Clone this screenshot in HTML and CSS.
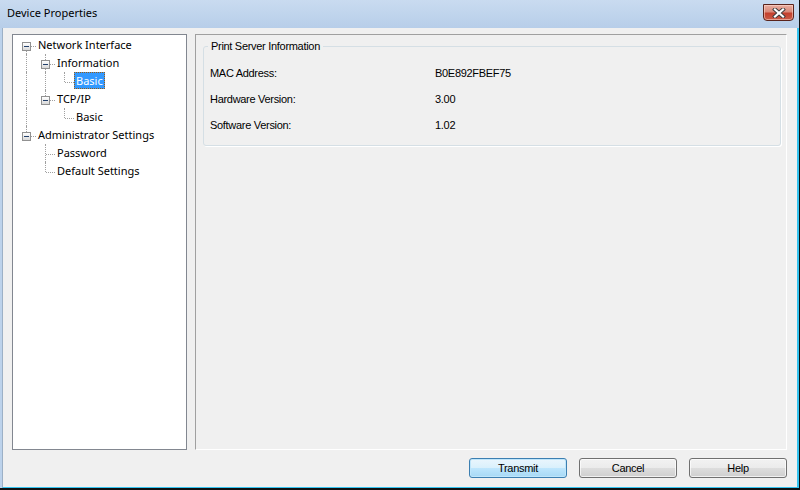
FILE: index.html
```html
<!DOCTYPE html>
<html>
<head>
<meta charset="utf-8">
<title>Device Properties</title>
<link rel="stylesheet" href="styles.css">
</head>
<body>
<div class="window">
  <div class="titlebar">
    <span class="title">Device Properties</span>
    <button class="close" aria-label="Close">
      <svg width="14" height="10" viewBox="0 0 14 10">
        <path d="M3 1.5 L11 8.5 M11 1.5 L3 8.5" stroke="#3b3b3b" stroke-width="4" stroke-linecap="square" fill="none"/>
        <path d="M3 1.5 L11 8.5 M11 1.5 L3 8.5" stroke="#ffffff" stroke-width="2.2" stroke-linecap="square" fill="none"/>
      </svg>
    </button>
  </div>
  <div class="client">
    <div class="panes">
      <div class="tree">
        <div class="node">
          <span class="cell down h"><i class="box"></i></span>
          <span class="label">Network Interface</span>
        </div>
        <div class="node">
          <span class="cell v"></span>
          <span class="cell v h"><i class="box"></i></span>
          <span class="label">Information</span>
        </div>
        <div class="node">
          <span class="cell v"></span>
          <span class="cell v"></span>
          <span class="cell up h"></span>
          <span class="label selected">Basic</span>
        </div>
        <div class="node">
          <span class="cell v"></span>
          <span class="cell up h"><i class="box"></i></span>
          <span class="label">TCP/IP</span>
        </div>
        <div class="node">
          <span class="cell v"></span>
          <span class="cell"></span>
          <span class="cell up h"></span>
          <span class="label">Basic</span>
        </div>
        <div class="node">
          <span class="cell up h"><i class="box"></i></span>
          <span class="label">Administrator Settings</span>
        </div>
        <div class="node">
          <span class="cell"></span>
          <span class="cell v h"></span>
          <span class="label">Password</span>
        </div>
        <div class="node">
          <span class="cell"></span>
          <span class="cell up h"></span>
          <span class="label">Default Settings</span>
        </div>
      </div>
      <div class="content">
        <fieldset class="group">
          <legend class="legend">Print Server Information</legend>
          <div class="info">
            <span class="key">MAC Address:</span><span class="val">B0E892FBEF75</span>
            <span class="key">Hardware Version:</span><span class="val">3.00</span>
            <span class="key">Software Version:</span><span class="val">1.02</span>
          </div>
        </fieldset>
      </div>
    </div>
    <div class="buttons">
      <button class="btn default">Transmit</button>
      <button class="btn">Cancel</button>
      <button class="btn">Help</button>
    </div>
  </div>
</div>
</body>
</html>
```
FILE: styles.css
```css
html, body {
  margin: 0;
  padding: 0;
}
body {
  width: 800px;
  height: 490px;
  overflow: hidden;
  background: #f0f0f0;
}
.window {
  width: 800px;
  height: 490px;
  box-sizing: border-box;
  border-right: 1px solid #101010;
  border-bottom: 2px solid #101010;
  background: #bcd2eb;
  display: flex;
  flex-direction: column;
}
.titlebar {
  height: 28px;
  flex: none;
  display: flex;
  align-items: flex-start;
  justify-content: space-between;
  background: linear-gradient(#c9dbf0, #b7cee9);
}
.title {
  font-family: "Noto Sans", sans-serif;
  font-size: 11px;
  line-height: 18px;
  color: #000;
  margin: 4px 0 0 7px;
}
.close {
  width: 31px;
  height: 17px;
  margin: 4px 5px 0 0;
  padding: 0;
  box-sizing: border-box;
  border: 1px solid #5a241c;
  border-radius: 0 0 4px 4px;
  background: linear-gradient(#e9ada0 0%, #d98a7a 45%, #c4402d 55%, #c95c48 100%);
  box-shadow: inset 0 0 0 1px rgba(255, 220, 210, 0.55);
  display: flex;
  align-items: center;
  justify-content: center;
}
.close svg {
  display: block;
}
.client {
  flex: 1;
  min-height: 0;
  margin-left: 2px;
  border-left: 1px solid #9cb0c6;
  border-right: 2px solid #35c4f0;
  border-bottom: 1px solid #35c4f0;
  background: #f0f0f0;
  padding: 6px 10px 9px 9px;
  display: flex;
  flex-direction: column;
  gap: 8px;
}
.panes {
  flex: 1;
  min-height: 0;
  display: flex;
  gap: 8px;
}
.tree {
  width: 175px;
  flex: none;
  box-sizing: border-box;
  border: 1px solid #828790;
  background: #fff;
  padding: 1px 0 0 4px;
  font-family: "Noto Sans", sans-serif;
  font-size: 11px;
  color: #000;
}
.node {
  display: flex;
  align-items: flex-start;
  height: 18px;
}
.cell {
  position: relative;
  width: 19px;
  height: 18px;
  flex: none;
}
.cell.v::before,
.cell.up::before,
.cell.down::before {
  content: "";
  position: absolute;
  left: 9px;
  border-left: 1px dotted #a0a0a0;
}
.cell.v::before {
  top: 0;
  bottom: 0;
}
.cell.up::before {
  top: 0;
  height: 10px;
}
.cell.down::before {
  top: 10px;
  bottom: 0;
}
.cell.h::after {
  content: "";
  position: absolute;
  left: 10px;
  right: 0;
  top: 10px;
  border-top: 1px dotted #a0a0a0;
}
.box {
  position: absolute;
  z-index: 1;
  left: 5px;
  top: 6px;
  width: 9px;
  height: 9px;
  box-sizing: border-box;
  border: 1px solid #919191;
  background: linear-gradient(#ffffff, #d8d8d8);
}
.box::after {
  content: "";
  position: absolute;
  left: 1px;
  top: 3px;
  width: 5px;
  height: 1px;
  background: #23406b;
}
.label {
  line-height: 18px;
  padding: 0 2px;
  white-space: nowrap;
}
.label.selected {
  line-height: 15px;
  padding: 0 1px;
  border: 1px dotted #9a5b10;
  background: #3399ff;
  color: #fff;
}
.content {
  flex: 1;
  min-width: 0;
  box-sizing: border-box;
  border-top: 1px solid #a0a0a0;
  border-left: 1px solid #a0a0a0;
  border-right: 1px solid #ffffff;
  border-bottom: 1px solid #ffffff;
  padding: 5px 5px 0 7px;
}
.group {
  margin: 0;
  min-width: 0;
  padding: 7px 4px 7px 4px;
  border: 1px solid #d5dfe5;
  border-radius: 3px;
  box-shadow: 1px 1px 0 #ffffff;
  font-family: "Liberation Sans", Arial, sans-serif;
  font-size: 11px;
  letter-spacing: -0.3px;
  color: #000;
}
.legend {
  padding: 0 3px;
  line-height: 13px;
}
.info {
  margin-left: 2px;
  display: grid;
  grid-template-columns: 225px auto;
  grid-auto-rows: 26px;
  align-items: center;
  line-height: 26px;
}
.buttons {
  flex: none;
  display: flex;
  justify-content: flex-end;
  gap: 12px;
}
.btn {
  width: 98px;
  height: 20px;
  margin: 0;
  padding: 0;
  box-sizing: border-box;
  border: 1px solid #707070;
  border-radius: 3px;
  background: linear-gradient(#f2f2f2 0%, #ebebeb 50%, #dddddd 51%, #cfcfcf 100%);
  box-shadow: inset 0 0 0 1px rgba(255, 255, 255, 0.7);
  font-family: "Liberation Sans", Arial, sans-serif;
  font-size: 11px;
  letter-spacing: -0.3px;
  color: #000;
  line-height: 18px;
}
.btn.default {
  border-color: #3c7fb1;
  background: linear-gradient(#eaf6fd 0%, #d9f0fc 50%, #bee6fd 51%, #a7d9f5 100%);
  box-shadow: inset 0 0 0 1px #bfe6fb;
}
```
